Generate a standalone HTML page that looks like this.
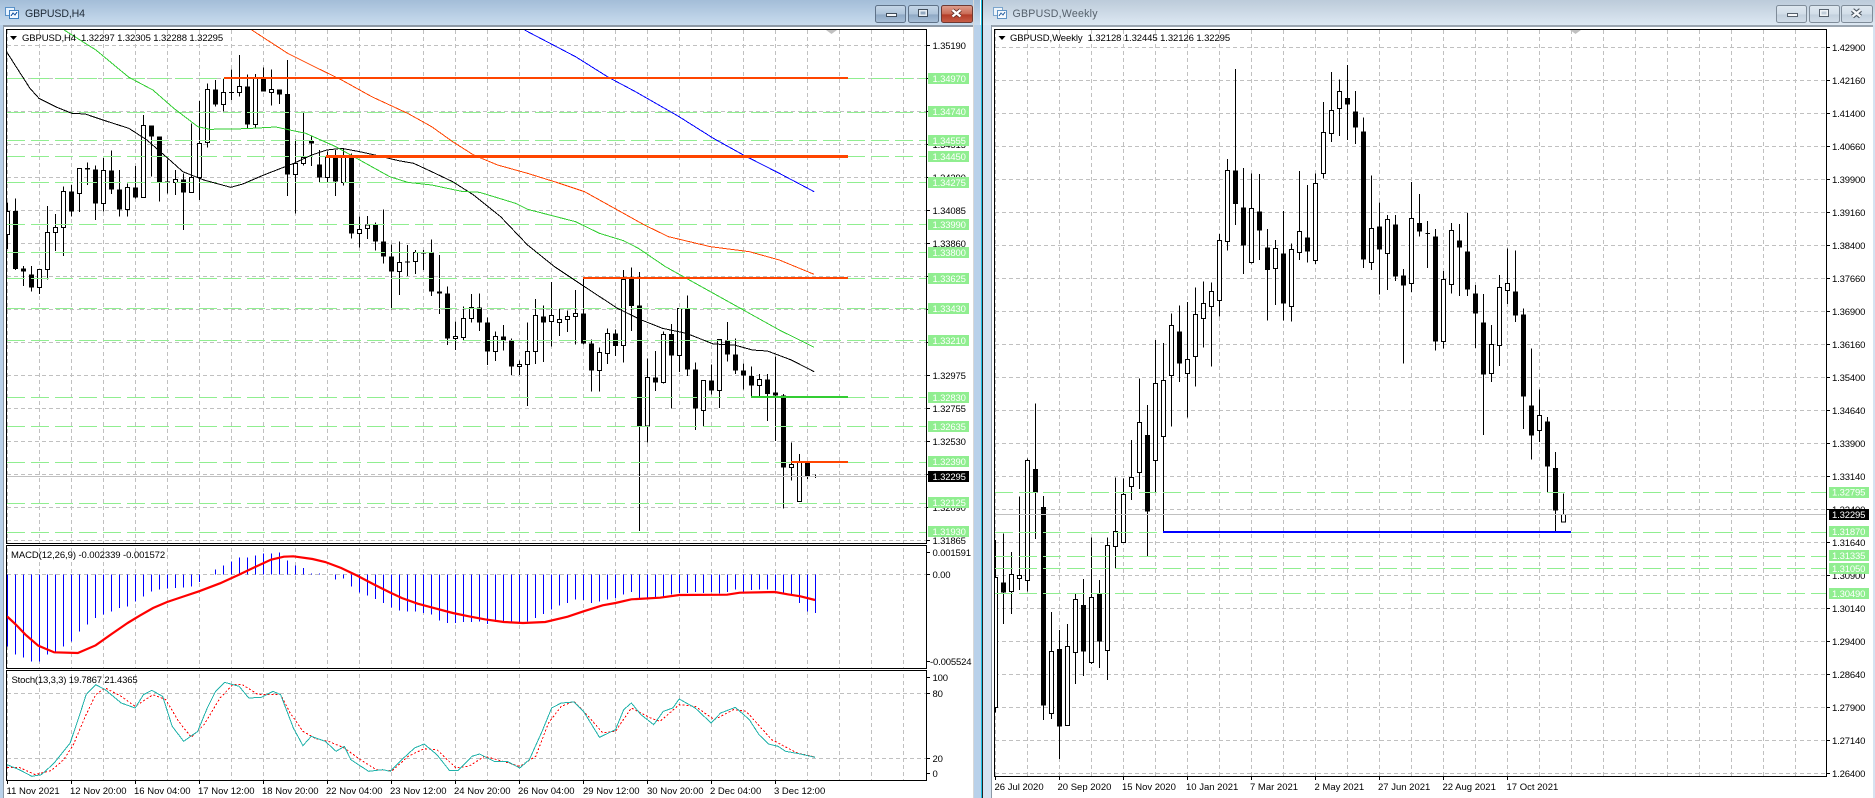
<!DOCTYPE html>
<html><head><meta charset="utf-8"><title>GBPUSD</title>
<style>
html,body{margin:0;padding:0;background:#fff;width:1875px;height:798px;overflow:hidden}
svg{position:absolute;left:0;top:0;display:block}
text{font-family:"Liberation Sans",sans-serif;font-size:9.5px;fill:#000;letter-spacing:-.15px}
.d text,text.d{letter-spacing:0}
.g{fill:#fff}
.ttl{font-size:10.6px;letter-spacing:0}
path,polyline{fill:none}
.n{vector-effect:non-scaling-stroke;fill:none;shape-rendering:crispEdges}
.w{stroke:#000;stroke-width:3;shape-rendering:crispEdges}
.bb{stroke:#000;stroke-width:15;shape-rendering:crispEdges}
.wb{stroke:#000;stroke-width:3;fill:#fff;shape-rendering:crispEdges}
.gl{stroke:#90ee90;stroke-width:1;stroke-dasharray:18 6;shape-rendering:crispEdges}
</style></head><body>
<svg width="1875" height="798" viewBox="0 0 1875 798" xmlns="http://www.w3.org/2000/svg">
<defs>
<linearGradient id="ta" x1="0" y1="0" x2="0" y2="1"><stop offset="0" stop-color="#a3bdd8"/><stop offset="1" stop-color="#c9dcee"/></linearGradient>
<linearGradient id="ti" x1="0" y1="0" x2="0" y2="1"><stop offset="0" stop-color="#bccbda"/><stop offset="1" stop-color="#dde8f2"/></linearGradient>
<linearGradient id="ba" x1="0" y1="0" x2="0" y2="1"><stop offset="0" stop-color="#c6d7e8"/><stop offset=".5" stop-color="#aec4da"/><stop offset=".55" stop-color="#8fa9c5"/><stop offset="1" stop-color="#a9c0d8"/></linearGradient>
<linearGradient id="bi" x1="0" y1="0" x2="0" y2="1"><stop offset="0" stop-color="#dfe8f0"/><stop offset=".5" stop-color="#d2dee9"/><stop offset=".55" stop-color="#c2d0dd"/><stop offset="1" stop-color="#d2dee9"/></linearGradient>
<linearGradient id="bc" x1="0" y1="0" x2="0" y2="1"><stop offset="0" stop-color="#dfa090"/><stop offset=".5" stop-color="#c96a55"/><stop offset=".55" stop-color="#b33c28"/><stop offset="1" stop-color="#c9604a"/></linearGradient>
<pattern id="gv" x="7" y="30" width="32" height="7" patternUnits="userSpaceOnUse"><rect width="1" height="4" fill="#c0c0c0"/></pattern>
<pattern id="gh" x="7" y="45" width="7" height="33" patternUnits="userSpaceOnUse"><rect width="4" height="1" fill="#c0c0c0"/></pattern>
<pattern id="hv" x="995" y="30" width="32" height="7" patternUnits="userSpaceOnUse"><rect width="1" height="4" fill="#c0c0c0"/></pattern>
<pattern id="hh" x="995" y="47" width="7" height="33" patternUnits="userSpaceOnUse"><rect width="4" height="1" fill="#c0c0c0"/></pattern>
<clipPath id="c1"><rect x="7" y="30" width="919" height="513"/></clipPath>
<clipPath id="c2"><rect x="995" y="30" width="831" height="746"/></clipPath>
<clipPath id="c3"><rect x="7" y="546" width="919" height="122"/></clipPath>
<clipPath id="c4"><rect x="7" y="671" width="919" height="109"/></clipPath>
</defs>

<!-- frames -->
<rect width="1875" height="798" fill="#fff"/>
<rect x="0" y="0" width="980" height="25" fill="url(#ta)"/>
<rect x="983" y="0" width="892" height="25" fill="url(#ti)"/>
<rect x="0" y="25" width="973" height="2" fill="#8d99a6"/>
<rect x="983" y="25" width="892" height="2" fill="#9aa5b0"/>
<rect x="0" y="25" width="3" height="773" fill="#b9d1ea"/>
<rect x="3" y="25" width="1" height="773" fill="#8d99a6"/>
<rect x="973" y="0" width="1" height="798" fill="#d8d8d8"/>
<rect x="974" y="25" width="7" height="773" fill="#b9d1ea"/>
<rect x="981" y="0" width="1" height="798" fill="#19c3e6"/>
<rect x="982" y="0" width="1" height="798" fill="#222"/>
<rect x="983" y="25" width="8" height="773" fill="#d6e3f1"/>
<rect x="991" y="25" width="1" height="773" fill="#8d99a6"/>
<rect x="1873" y="25" width="2" height="773" fill="#d6e3f1"/>

<!-- title icons -->
<g shape-rendering="crispEdges">
<rect x="5.5" y="7.5" width="9" height="8" fill="#e6f2ff" stroke="#5a92c8"/>
<rect x="9.5" y="10.5" width="9" height="8" fill="#f2f8ff" stroke="#3f7fbf"/>
<path d="M11 16l2-3 2 2 2-3" stroke="#2b62a8"/>
<rect x="993.5" y="7.5" width="9" height="8" fill="#eef5fb" stroke="#7ba5cd"/>
<rect x="997.5" y="10.5" width="9" height="8" fill="#f5f9fd" stroke="#5f92c3"/>
<path d="M999 16l2-3 2 2 2-3" stroke="#4676ae"/>
</g>
<text class="ttl" x="25" y="17" style="fill:#1f2b38" textLength="60">GBPUSD,H4</text>
<text class="ttl" x="1012.5" y="17" style="fill:#56616c" textLength="85">GBPUSD,Weekly</text>

<!-- buttons left -->
<rect x="875.5" y="5.5" width="30" height="17" rx="2" fill="url(#ba)" stroke="#5f7288"/>
<rect x="886.5" y="13.5" width="10" height="3" fill="#f4f7fa" stroke="#3f4c5a"/>
<rect x="908.5" y="5.5" width="30" height="17" rx="2" fill="url(#ba)" stroke="#5f7288"/>
<rect x="918.5" y="9.5" width="9" height="7" fill="#e8eef4" stroke="#3f4c5a"/>
<rect x="920.5" y="11.5" width="5" height="3" fill="#93a9c0"/>
<rect x="941.5" y="5.5" width="31" height="17" rx="2" fill="url(#bc)" stroke="#6d3a34"/>
<path d="M952.5 10l8 6.5M960.5 10l-8 6.5" stroke="#5b2a24" stroke-width="4"/>
<path d="M952.5 10l8 6.5M960.5 10l-8 6.5" stroke="#fff" stroke-width="2.4"/>
<!-- buttons right -->
<rect x="1776.5" y="5.5" width="30" height="17" rx="2" fill="url(#bi)" stroke="#7f8c99"/>
<rect x="1787.5" y="13.5" width="10" height="3" fill="#f6f8fa" stroke="#55606c"/>
<rect x="1809.5" y="5.5" width="30" height="17" rx="2" fill="url(#bi)" stroke="#7f8c99"/>
<rect x="1819.5" y="9.5" width="9" height="7" fill="#eef2f6" stroke="#55606c"/>
<rect x="1821.5" y="11.5" width="5" height="3" fill="#c0cdd9"/>
<rect x="1841.5" y="5.5" width="31" height="17" rx="2" fill="url(#bi)" stroke="#7f8c99"/>
<path d="M1852.5 10l8 6.5M1860.5 10l-8 6.5" stroke="#4a545f" stroke-width="4.6"/>
<path d="M1852.5 10l8 6.5M1860.5 10l-8 6.5" stroke="#f6f8fa" stroke-width="2.4"/>

<!-- H4 grid -->
<rect x="7" y="30" width="919" height="513" fill="url(#gv)"/>
<rect x="7" y="45" width="919" height="498" fill="url(#gh)"/>
<rect x="7" y="546" width="919" height="122" fill="url(#gv)"/>
<rect x="7" y="671" width="919" height="109" fill="url(#gv)"/>

<g clip-path="url(#c1)">
<!-- H4 candles part 1 -->
<g transform="translate(.1667 40) scale(.33333)">
<path class="w" d="M22 487V627M46 475V690M70 678V738M94 678V755M118 688V762M142 498V718M166 522V633M190 440V648M214 435V530M238 386V516M262 368V435M286 376V540M310 354V515M334 331V462M358 390V530M382 430V530M406 378V476M430 225V472M454 256V410M478 289V485M502 358V460M526 390V465M550 400V570M574 250V457M598 183V480M622 130V323M646 120V200M670 115V215M694 88V180M718 45V170M742 103V265M766 102V265M790 82V155M814 88V197M838 148V192M862 60V468M886 298V520M910 218V376M934 290V378M958 330V428M982 335V428M1006 330V468M1030 325V437M1054 340V596M1078 530V623M1102 528V597M1126 548V632M1150 508V670M1174 614V808M1198 604V765M1222 615V708M1246 630V702M1270 630V690M1294 598V768M1318 645V822M1342 740V915"/>
<path class="bb" d="M46 513V687M70 685V695M94 703V743M214 454V515M262 384V389M286 388V490M334 391V449M358 448V508M406 442V473M454 256V290M478 289V426M502 424V428M550 418V458M646 148V193M694 156V159M742 139V254M790 117V155M838 148V164M862 162V403M934 303V311M958 373V413M1006 350V425M1054 350V581M1126 555V605M1150 604V650M1174 649V695M1222 664V667M1270 639V641M1294 638V755M1318 754V761M1342 760V896"/>
<path class="wb" d="M16 515h12V583h-12zM112 688h12V742h-12zM136 577h12V688h-12zM160 563h12V577h-12zM184 455h12V562h-12zM232 386h12V460h-12zM304 392h12V490h-12zM376 442h12V508h-12zM424 257h12V472h-12zM520 419h12V427h-12zM568 412h12V457h-12zM592 311h12V412h-12zM616 149h12V307h-12zM664 157h12V193h-12zM712 140h12V157h-12zM760 115h12V253h-12zM808 149h12V157h-12zM880 370h12V403h-12zM904 353h12V370h-12zM976 350h12V413h-12zM1024 350h12V428h-12zM1072 569h12V581h-12zM1096 555h12V565h-12zM1192 667h12V694h-12zM1240 637h12V664h-12z"/>
</g>
<!-- H4 candles part 2 -->
<g transform="translate(450.1667 220) scale(.33333)">
<path class="w" d="M16 305V390M40 260V360M64 222V308M88 220V333M112 292V435M136 335V423M160 315V392M184 355V465M208 422V465M232 307V558M256 237V432M280 256V426M304 186V380M328 265V348M352 272V336M376 210V374M400 175V374M424 358V515M448 382V515M472 325V432M496 328V408M520 150V428M544 142V333M568 156V933M592 415V668M616 393V513M640 335V490M664 312V566M688 265V456M712 226V468M736 428V630M760 481V618M784 433V523M808 358V564M832 306V425M856 355V462M880 430V508M904 440V530M928 462V528M952 462V603M976 410V663M1000 522V866M1024 667V782M1048 702V845M1072 728V777M1096 764V774M1088 769H1104"/>
<path class="bb" d="M88 263V308M112 307V395M160 349V361M184 362V440M280 289V308M400 280V371M424 370V452M496 340V378M544 175V258M568 256V618M616 472V488M664 342V407M712 264V449M736 448V566M784 481V512M832 362V404M856 403V452M880 451V467M904 468V497M952 478V522M976 517V527M1000 526V743M1072 728V770"/>
<path class="wb" d="M10 349h12V356h-12zM34 296h12V353h-12zM58 263h12V296h-12zM130 350h12V395h-12zM202 433h12V440h-12zM226 395h12V434h-12zM250 287h12V395h-12zM298 287h12V304h-12zM322 299h12V307h-12zM346 290h12V299h-12zM370 281h12V290h-12zM442 398h12V452h-12zM466 340h12V400h-12zM514 178h12V376h-12zM586 472h12V618h-12zM634 343h12V488h-12zM682 265h12V406h-12zM754 481h12V571h-12zM802 358h12V512h-12zM922 479h12V497h-12zM1018 733h12V742h-12zM1042 728h12V844h-12z"/>
</g>
<!-- H4 green levels and price line -->
<path class="gl" d="M7 78.5H926M7 112.5H926M7 140.5H926M7 156.5H926M7 182.5H926M7 224.5H926M7 252.5H926M7 278.5H926M7 308.5H926M7 340.5H926M7 397.5H926M7 426.5H926M7 462.5H926M7 503.5H926M7 532.5H926"/>
<path d="M7 476.5H926" stroke="#c0c0c0" shape-rendering="crispEdges"/>
<!-- H4 moving averages -->
<g transform="scale(.59949 .33333)">
<polyline class="n" stroke="#000" stroke-width="1" points="12,158 25,195 50,265 65,295 95,322 120,340 142,342 175,362 215,385 245,420 280,475 305,515 340,540 385,562 405,552 440,525 490,490 520,465 545,450 570,445 600,455 625,465 665,482 690,490 720,515 755,545 790,585 835,650 880,735 925,800 975,860 1030,925 1070,960 1105,985 1145,1000 1190,1032 1225,1035 1255,1050 1280,1053 1320,1080 1358,1115"/>
<polyline class="n" stroke="#32cd32" stroke-width="1" points="107,90 160,150 215,232 255,270 290,325 330,380 350,388 410,386 460,381 510,400 560,440 600,480 650,530 680,547 720,555 770,574 800,577 860,610 880,628 960,665 1000,700 1040,722 1065,745 1110,800 1170,860 1240,930 1300,990 1358,1042"/>
<polyline class="n" stroke="#ff4500" stroke-width="1" points="420,90 480,160 530,205 570,240 620,290 680,340 720,380 755,425 790,465 830,495 880,520 930,548 975,575 1030,630 1075,675 1115,710 1185,740 1250,755 1300,780 1358,823"/>
<polyline class="n" stroke="#0000ff" stroke-width="1" points="875,90 960,170 1015,232 1060,275 1130,347 1190,415 1240,465 1300,520 1358,575"/>
</g>
<!-- H4 trend lines -->
<g shape-rendering="crispEdges">
<rect x="224" y="77" width="624" height="2" fill="#ff4500"/>
<rect x="326" y="155" width="522" height="3" fill="#ff4500"/>
<rect x="583" y="277" width="265" height="2" fill="#ff4500"/>
<rect x="751" y="396" width="97" height="2" fill="#32cd32"/>
<rect x="791" y="461" width="57" height="2" fill="#ff4500"/>
</g>
</g>
<path d="M826 30h11l-5.5 4z" style="fill:#c0c0c0"/>
<path d="M10 36h7l-3.5 4z" style="fill:#000"/>
<text x="22" y="41" textLength="201">GBPUSD,H4&#160;&#160;1.32297 1.32305 1.32288 1.32295</text>

<!-- MACD -->
<path d="M7 574.500H926" stroke="#c0c0c0" stroke-dasharray="4 3" shape-rendering="crispEdges"/>
<g clip-path="url(#c3)">
<g transform="translate(0 398) scale(1 .33333)">
<path class="n" stroke="#0000ff" stroke-width="1" d="M7.500 529V745M15.500 529V770M23.500 529V778M31.500 529V790M39.500 529V790M47.500 529V770M55.500 529V760M63.500 529V745M71.500 529V730M79.500 529V700M87.500 529V680M95.500 529V660M103.500 529V650M111.500 529V640M119.500 529V630M127.500 529V625M135.500 529V610M143.500 529V595M151.500 529V580M159.500 529V575M167.500 529V572M175.500 529V570M183.500 529V568M191.500 529V565M199.500 529V552M215.500 529V515M223.500 529V503M231.500 529V490M239.500 529V478M247.500 529V478M255.500 529V472M263.500 529V466M271.500 529V466M279.500 529V464M287.500 529V488M295.500 529V503M303.500 529V510M311.500 529V526M319.500 529V527M335.500 529V544M343.500 529V542M351.500 529V565M359.500 529V583M367.500 529V592M375.500 529V603M383.500 529V615M391.500 529V628M399.500 529V638M407.500 529V640M415.500 529V640M423.500 529V645M431.500 529V650M439.500 529V668M447.500 529V675M455.500 529V675M463.500 529V672M471.500 529V672M479.500 529V670M487.500 529V678M495.500 529V672M503.500 529V670M511.500 529V672M519.500 529V675M527.500 529V670M535.500 529V660M543.500 529V648M551.500 529V635M559.500 529V622M567.500 529V615M575.500 529V605M583.500 529V606M591.500 529V615M599.500 529V610M607.500 529V605M615.500 529V600M623.500 529V590M631.500 529V582M639.500 529V600M647.500 529V600M655.500 529V602M663.500 529V595M671.500 529V590M679.500 529V585M687.500 529V585M695.500 529V582M703.500 529V585M711.500 529V582M719.500 529V586M727.500 529V582M735.500 529V575M743.500 529V582M751.500 529V576M759.500 529V575M767.500 529V575M775.500 529V578M783.500 529V590M791.500 529V590M799.500 529V615M807.500 529V640M815.500 529V645"/>
</g>
<g transform="translate(0 398) scale(.63776 .33333)">
<polyline class="n" stroke="#ff0000" stroke-width="2.200" style="shape-rendering:auto" points="11,655 25,680 40,710 60,743 85,763 122,765 150,742 175,708 200,675 220,652 240,630 262,612 290,594 312,580 345,556 375,530 400,507 425,485 445,476 460,475 490,483 510,492 535,510 560,533 585,558 610,582 630,600 655,617 680,630 710,645 735,655 760,664 790,672 820,675 855,672 890,656 915,640 945,622 965,615 990,604 1035,599 1065,591 1140,590 1160,584 1215,582 1235,589 1255,595 1278,606"/>
</g>
</g>
<text x="11" y="558" textLength="154">MACD(12,26,9) -0.002339 -0.001572</text>

<!-- Stoch -->
<path d="M7 693.500H926M7 758.500H926" stroke="#c0c0c0" stroke-dasharray="4 3" shape-rendering="crispEdges"/>
<g clip-path="url(#c4)">
<g transform="translate(0 398) scale(.63776 .33333)">
<polyline class="n" stroke="#ff0000" stroke-width="1" stroke-dasharray="2 2" points="11,1108 30,1108 55,1130 80,1118 100,1085 115,1040 135,950 150,890 165,870 190,895 212,925 240,890 260,905 280,970 300,1018 320,980 345,900 365,860 380,860 405,890 440,890 455,945 475,1000 495,1022 515,1030 540,1050 565,1085 590,1115 615,1118 640,1075 665,1052 685,1055 715,1110 735,1105 760,1075 785,1088 815,1105 840,1075 860,975 880,925 900,910 925,960 945,1005 965,1000 990,930 1020,960 1035,970 1065,920 1090,925 1120,965 1150,935 1170,940 1210,1025 1250,1065 1278,1077"/>
<polyline class="n" stroke="#20b2aa" stroke-width="1" points="11,1100 30,1115 50,1135 65,1130 85,1095 110,1035 125,950 135,890 150,860 165,875 190,915 212,930 225,890 238,877 255,895 270,985 288,1030 310,1000 325,930 338,880 352,853 375,865 390,900 410,898 428,880 440,890 460,990 475,1043 488,1015 510,1030 527,1060 540,1045 550,1085 578,1120 600,1115 612,1120 630,1085 650,1050 665,1038 685,1070 705,1118 718,1118 740,1075 752,1068 775,1090 795,1090 815,1110 830,1085 850,1000 865,930 880,915 900,912 915,940 940,1018 965,995 978,935 990,915 1005,950 1025,980 1040,940 1055,930 1065,903 1090,930 1115,975 1130,945 1153,928 1175,965 1190,1010 1205,1038 1220,1045 1232,1060 1255,1068 1278,1078"/>
</g>
</g>
<text x="11.500" y="683" textLength="126">Stoch(13,3,3) 19.7867 21.4365</text>

<!-- H4 borders -->
<g fill="none" stroke="#000" shape-rendering="crispEdges">
<rect x="6.500" y="29.500" width="920" height="514"/>
<rect x="6.500" y="545.500" width="920" height="123"/>
<rect x="6.500" y="670.500" width="920" height="110"/>
<path d="M927 45.500h3M927 78.500h3M927 111.500h3M927 144.500h3M927 177.500h3M927 210.500h3M927 243.500h3M927 276.500h3M927 309.500h3M927 342.500h3M927 375.500h3M927 408.500h3M927 441.500h3M927 474.500h3M927 507.500h3M927 540.500h3M927 552.500h3M927 574.500h3M927 661.500h3M927 677.500h3M927 693.500h3M927 758.500h3M927 773.500h3"/>
<path d="M7.500 781v3M71.500 781v3M135.500 781v3M199.500 781v3M263.500 781v3M327.500 781v3M391.500 781v3M455.500 781v3M519.500 781v3M583.500 781v3M647.500 781v3M711.500 781v3M775.500 781v3"/>
</g>

<!-- H4 axis labels -->
<g>
<text x="932.500" y="49">1.35190</text><text x="932.500" y="82">1.34965</text><text x="932.500" y="115">1.34740</text><text x="932.500" y="148">1.34515</text><text x="932.500" y="181">1.34290</text><text x="932.500" y="214">1.34085</text><text x="932.500" y="247">1.33860</text><text x="932.500" y="280">1.33640</text><text x="932.500" y="313">1.33415</text><text x="932.500" y="346">1.33195</text><text x="932.500" y="379">1.32975</text><text x="932.500" y="412">1.32755</text><text x="932.500" y="445">1.32530</text><text x="932.500" y="478">1.32310</text><text x="932.500" y="511">1.32090</text><text x="932.500" y="544">1.31865</text>
</g>
<g fill="#90ee90" shape-rendering="crispEdges">
<rect x="928" y="73" width="41" height="11"/><rect x="928" y="106" width="41" height="11"/><rect x="928" y="135" width="41" height="11"/><rect x="928" y="151" width="41" height="11"/><rect x="928" y="177" width="41" height="11"/><rect x="928" y="219" width="41" height="11"/><rect x="928" y="247" width="41" height="11"/><rect x="928" y="273" width="41" height="11"/><rect x="928" y="303" width="41" height="11"/><rect x="928" y="335" width="41" height="11"/><rect x="928" y="392" width="41" height="11"/><rect x="928" y="421" width="41" height="11"/><rect x="928" y="456" width="41" height="11"/><rect x="928" y="497" width="41" height="11"/><rect x="928" y="526" width="41" height="11"/>
</g>
<g>
<text class="g" x="932.500" y="82">1.34970</text><text class="g" x="932.500" y="115">1.34740</text><text class="g" x="932.500" y="144">1.34555</text><text class="g" x="932.500" y="160">1.34450</text><text class="g" x="932.500" y="186">1.34275</text><text class="g" x="932.500" y="228">1.33990</text><text class="g" x="932.500" y="256">1.33800</text><text class="g" x="932.500" y="282">1.33625</text><text class="g" x="932.500" y="312">1.33430</text><text class="g" x="932.500" y="344">1.33210</text><text class="g" x="932.500" y="401">1.32830</text><text class="g" x="932.500" y="430">1.32635</text><text class="g" x="932.500" y="465">1.32390</text><text class="g" x="932.500" y="506">1.32125</text><text class="g" x="932.500" y="535">1.31930</text>
</g>
<rect x="928" y="471" width="41" height="11" fill="#000"/>
<text class="g" x="932.500" y="480">1.32295</text>
<text x="932.500" y="556">0.001591</text><text x="932.500" y="578">0.00</text><text x="930" y="665">-0.005524</text>
<text x="932.500" y="681">100</text><text x="932.500" y="697">80</text><text x="932.500" y="762">20</text><text x="932.500" y="777">0</text>
<g class="d">
<text x="6.500" y="794">11 Nov 2021</text><text x="70" y="794">12 Nov 20:00</text><text x="134" y="794">16 Nov 04:00</text><text x="198" y="794">17 Nov 12:00</text><text x="262" y="794">18 Nov 20:00</text><text x="326" y="794">22 Nov 04:00</text><text x="390" y="794">23 Nov 12:00</text><text x="454" y="794">24 Nov 20:00</text><text x="518" y="794">26 Nov 04:00</text><text x="583" y="794">29 Nov 12:00</text><text x="647" y="794">30 Nov 20:00</text><text x="710" y="794">2 Dec 04:00</text><text x="774" y="794">3 Dec 12:00</text>
</g>

<!-- Weekly -->
<rect x="995" y="30" width="831" height="746" fill="url(#hv)"/>
<rect x="995" y="47" width="831" height="729" fill="url(#hh)"/>
<g clip-path="url(#c2)">
<g transform="translate(960.1667 370) scale(.33333)">
<path class="w" d="M106 510V1028M130 490V762M154 546V732M178 380V660M202 265V665M226 100V507M250 378V1050M274 726V1047M298 780V1167M322 762V1066M346 672V942M370 627V918M394 502V882M418 630V894M442 502V930M466 322V595M490 325V518M514 210V390M538 25V357M562 105V558M586 -90V367M610 -81V485"/>
<path class="bb" d="M130 637V668M226 297V367M250 411V1007M298 837V1070M370 705V845M418 672V815M562 195V425"/>
<path class="wb" d="M100 622h12V1012h-12zM148 614h12V664h-12zM172 617h12V625h-12zM196 271h12V631h-12zM268 845h12V1030h-12zM316 829h12V1066h-12zM340 688h12V847h-12zM388 682h12V878h-12zM436 527h12V841h-12zM460 485h12V529h-12zM484 373h12V518h-12zM508 322h12V349h-12zM532 157h12V307h-12zM580 40h12V271h-12zM604 31h12V199h-12z"/>
</g>
<g transform="translate(1140.1667 50) scale(.33333)">
<path class="w" d="M94 790V1130M118 766V996M142 756V1103M166 712V1010M190 694V893M214 697V950M238 552V800M262 327V602M286 57V525M310 354V672M334 370V640M358 372V630M382 537V812M406 570V765M430 483V812M454 580V815M478 363V630M502 405V638M526 370V642M550 156V386M574 66V276M598 88V258M622 45V270M646 123V282M670 202V654M694 376V660M718 457V733M742 495V720M766 495V693M790 657V941M814 396V726M838 432V560M862 513V654M856 550H870M886 537V902M910 663V895M934 519V731M958 522V738M982 489V738M1006 705V894M1030 732V1155M1054 825V996M1078 675V948M1102 595V762M1126 601V816M1150 775V1137M1174 895V1229M1198 1018V1176M1222 1101V1326M1246 1206V1444M1270 1330V1416"/>
<path class="bb" d="M118 844V941M286 361V462M310 472V587M358 484V542M382 592V660M430 610V761M502 562V605M622 144V164M646 184V233M670 244V629M718 529V599M766 523V680M790 676V707M838 519V545M886 559V875M958 571V593M982 604V719M1006 730V791M1030 817V974M1126 724V797M1150 793V1040M1174 1066V1157M1222 1114V1250M1246 1254V1382"/>
<path class="wb" d="M88 827h12V976h-12zM136 929h12V971h-12zM160 794h12V919h-12zM184 761h12V805h-12zM208 725h12V769h-12zM232 572h12V751h-12zM256 362h12V574h-12zM328 476h12V637h-12zM400 596h12V655h-12zM448 599h12V769h-12zM472 545h12V607h-12zM520 401h12V631h-12zM544 248h12V370h-12zM568 182h12V250h-12zM592 125h12V175h-12zM688 536h12V637h-12zM736 509h12V610h-12zM808 506h12V700h-12zM904 689h12V875h-12zM928 542h12V703h-12zM1048 884h12V970h-12zM1072 713h12V886h-12zM1096 701h12V721h-12zM1192 1097h12V1141h-12zM1264 1393h12V1416h-12z"/>
</g>
<path class="gl" d="M995 492.500H1826M995 532.500H1826M995 556.500H1826M995 568.500H1826M995 593.500H1826"/>
<path d="M995 514.500H1826" stroke="#c0c0c0" shape-rendering="crispEdges"/>
<rect x="1163" y="531" width="408" height="2" fill="#0000ff" shape-rendering="crispEdges"/>
</g>
<path d="M1570 30h11l-5.5 4z" style="fill:#c0c0c0"/>
<path d="M998.5 36h7l-3.5 4z" style="fill:#000"/>
<text x="1010" y="41" textLength="220">GBPUSD,Weekly&#160;&#160;1.32128 1.32445 1.32126 1.32295</text>
<g fill="none" stroke="#000" shape-rendering="crispEdges">
<rect x="994.500" y="29.500" width="832" height="747"/>
<path d="M1827 47.500h3M1827 80.500h3M1827 113.500h3M1827 146.500h3M1827 179.500h3M1827 212.500h3M1827 245.500h3M1827 278.500h3M1827 311.500h3M1827 344.500h3M1827 377.500h3M1827 410.500h3M1827 443.500h3M1827 476.500h3M1827 509.500h3M1827 542.500h3M1827 575.500h3M1827 608.500h3M1827 641.500h3M1827 674.500h3M1827 707.500h3M1827 740.500h3M1827 773.500h3"/>
<path d="M995.500 777v3M1059.500 777v3M1123.500 777v3M1187.500 777v3M1251.500 777v3M1315.500 777v3M1379.500 777v3M1443.500 777v3M1507.500 777v3"/>
</g>
<g>
<text x="1832" y="51">1.42900</text><text x="1832" y="84">1.42160</text><text x="1832" y="117">1.41400</text><text x="1832" y="150">1.40660</text><text x="1832" y="183">1.39900</text><text x="1832" y="216">1.39160</text><text x="1832" y="249">1.38400</text><text x="1832" y="282">1.37660</text><text x="1832" y="315">1.36900</text><text x="1832" y="348">1.36160</text><text x="1832" y="381">1.35400</text><text x="1832" y="414">1.34640</text><text x="1832" y="447">1.33900</text><text x="1832" y="480">1.33140</text><text x="1832" y="513">1.32400</text><text x="1832" y="546">1.31640</text><text x="1832" y="579">1.30900</text><text x="1832" y="612">1.30140</text><text x="1832" y="645">1.29400</text><text x="1832" y="678">1.28640</text><text x="1832" y="711">1.27900</text><text x="1832" y="744">1.27140</text><text x="1832" y="777">1.26400</text>
</g>
<g fill="#90ee90" shape-rendering="crispEdges">
<rect x="1829" y="487" width="40" height="11"/><rect x="1829" y="526" width="40" height="11"/><rect x="1829" y="550" width="40" height="11"/><rect x="1829" y="563" width="40" height="11"/><rect x="1829" y="588" width="40" height="11"/>
</g>
<text class="g" x="1832" y="495.500">1.32795</text><text class="g" x="1832" y="535">1.31870</text><text class="g" x="1832" y="559">1.31335</text><text class="g" x="1832" y="572">1.31050</text><text class="g" x="1832" y="597">1.30490</text>
<rect x="1829" y="509" width="40" height="11" fill="#000"/>
<text class="g" x="1832" y="518">1.32295</text>
<g class="d">
<text x="994.500" y="790">26 Jul 2020</text><text x="1057.500" y="790">20 Sep 2020</text><text x="1122" y="790">15 Nov 2020</text><text x="1186" y="790">10 Jan 2021</text><text x="1250" y="790">7 Mar 2021</text><text x="1314.500" y="790">2 May 2021</text><text x="1378" y="790">27 Jun 2021</text><text x="1442.500" y="790">22 Aug 2021</text><text x="1506.500" y="790">17 Oct 2021</text>
</g>
</svg>
</body></html>
